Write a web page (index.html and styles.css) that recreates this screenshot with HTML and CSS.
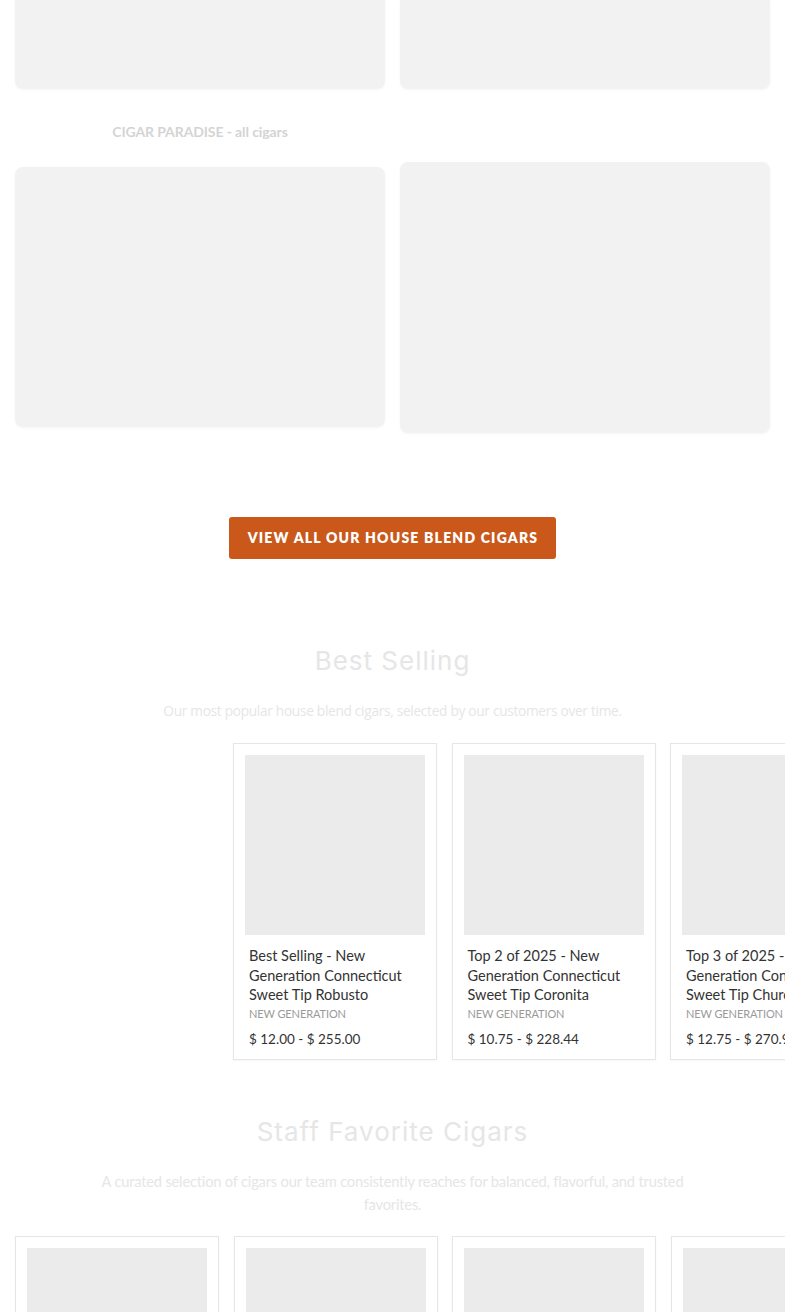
FILE: index.html
```html
<!DOCTYPE html>
<html lang="en">
<head>
<meta charset="utf-8">
<title>House Blend Cigars</title>
<link rel="stylesheet" href="styles.css">
</head>
<body>
  <section class="collections">
    <div class="col">
      <div class="tile tile-top"></div>
      <p class="tile-label">CIGAR PARADISE - all cigars</p>
      <div class="tile tile-a"></div>
    </div>
    <div class="col col-right">
      <div class="tile tile-top"></div>
      <div class="tile tile-b"></div>
    </div>
  </section>

  <div class="cta">
    <a class="btn" href="#">VIEW ALL OUR HOUSE BLEND CIGARS</a>
  </div>

  <section class="featured">
    <h2 class="section-title">Best Selling</h2>
    <p class="section-sub">Our most popular house blend cigars, selected by our customers over time.</p>
    <div class="track track-offset">
      <article class="product">
        <div class="thumb"></div>
        <h3 class="p-title">Best Selling - New Generation Connecticut Sweet Tip Robusto</h3>
        <div class="p-vendor">NEW GENERATION</div>
        <div class="p-price">$ 12.00 - $ 255.00</div>
      </article>
      <article class="product">
        <div class="thumb"></div>
        <h3 class="p-title">Top 2 of 2025 - New Generation Connecticut Sweet Tip Coronita</h3>
        <div class="p-vendor">NEW GENERATION</div>
        <div class="p-price">$ 10.75 - $ 228.44</div>
      </article>
      <article class="product">
        <div class="thumb"></div>
        <h3 class="p-title">Top 3 of 2025 - New Generation Connecticut Sweet Tip Churchill</h3>
        <div class="p-vendor">NEW GENERATION</div>
        <div class="p-price">$ 12.75 - $ 270.94</div>
      </article>
    </div>
  </section>

  <section class="featured staff">
    <h2 class="section-title">Staff Favorite Cigars</h2>
    <p class="section-sub narrow">A curated selection of cigars our team consistently reaches for balanced, flavorful, and trusted favorites.</p>
    <div class="track">
      <article class="product"><div class="thumb"></div></article>
      <article class="product"><div class="thumb"></div></article>
      <article class="product"><div class="thumb"></div></article>
      <article class="product"><div class="thumb"></div></article>
    </div>
  </section>
</body>
</html>
```

FILE: styles.css
```css
html, body {
  margin: 0;
  padding: 0;
  background: #ffffff;
  overflow: hidden;
}

body {
  width: 785px;
  height: 1312px;
  font-family: "Lato", "Noto Sans", sans-serif;
  color: #333;
}

/* collection tiles */
.collections {
  display: grid;
  grid-template-columns: 370px 370px;
  column-gap: 15px;
  padding: 0 15px;
}

.col {
  display: flex;
  flex-direction: column;
}

.tile {
  background: #f2f2f2;
  border-radius: 8px;
  box-shadow: 0 1px 3px rgba(0, 0, 0, 0.04);
}

.tile-top {
  height: 89px;
  border-top-left-radius: 0;
  border-top-right-radius: 0;
}

.tile-label {
  margin: 33px 0 25px;
  text-align: center;
  font-size: 14px;
  line-height: 20px;
  font-weight: 700;
  color: #d4d4d4;
  letter-spacing: -0.1px;
}

.tile-a { height: 260px; }

.col-right .tile-b {
  margin-top: 73px;
  height: 271px;
}

/* call to action */
.cta {
  display: flex;
  justify-content: center;
  padding-top: 84px;
}

.btn {
  display: inline-block;
  background: #c9581a;
  color: #fff;
  text-decoration: none;
  font-family: "Lato", sans-serif;
  font-weight: 800;
  font-size: 14px;
  letter-spacing: 1.2px;
  line-height: 42px;
  height: 42px;
  padding: 0 18px 0 19px;
  border-radius: 3px;
}

/* product sections */
.featured {
  padding-top: 84px;
}

.section-title {
  margin: 0;
  text-align: center;
  font-family: "Inter", "Lato", sans-serif;
  font-weight: 400;
  font-size: 26px;
  line-height: 36px;
  letter-spacing: 1px;
  color: #e6e6e6;
}

.section-sub {
  margin: 20px auto 21px;
  text-align: center;
  font-family: "Open Sans", sans-serif;
  font-size: 13.7px;
  line-height: 23px;
  color: #e6e6e6;
  letter-spacing: -0.3px;
}

.section-sub.narrow {
  width: 600px;
  font-family: "Lato", sans-serif;
  font-size: 14.7px;
  letter-spacing: -0.2px;
}

.track {
  display: flex;
  gap: 14.5px;
  padding-left: 15px;
}

.track-offset {
  padding-left: 233px;
}

.product {
  flex: 0 0 204px;
  min-width: 0;
  box-sizing: border-box;
  height: 317px;
  padding: 11px;
  border: 1px solid #e6e6e6;
  background: #fff;
  box-shadow: 0 1px 2px rgba(0, 0, 0, 0.04);
}

.thumb {
  width: 180px;
  height: 180px;
  background: #ebebeb;
}

.p-title {
  margin: 11px 4px 0;
  font-family: "Lato", sans-serif;
  font-weight: 400;
  font-size: 14.5px;
  line-height: 19.5px;
  color: #333;
}

.p-vendor {
  margin: 1px 4px 0;
  font-size: 11px;
  line-height: 15px;
  color: #9a9a9a;
  letter-spacing: -0.1px;
}

.p-price {
  margin: 9px 4px 0;
  font-size: 13.5px;
  line-height: 18px;
  color: #333;
  white-space: nowrap;
}

.staff {
  padding-top: 54px;
}

.staff .section-sub {
  margin-top: 20px;
  margin-bottom: 20px;
}
```
